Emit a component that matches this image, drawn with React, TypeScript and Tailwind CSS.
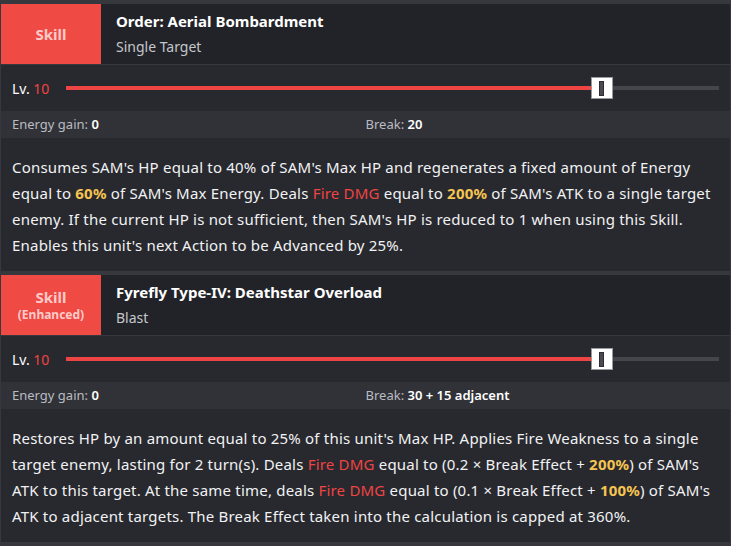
import React from 'react';

type Part = { t: string; c?: 'fire' | 'num' };

interface SkillProps {
  kind: string;
  sub?: string;
  name: string;
  target: string;
  level: number;
  energy: string;
  brk: string;
  desc: Part[];
}

const Slider: React.FC<{ value: number; max: number }> = ({ value, max }) => {
  const frac = value / max;
  return (
    <div className="relative flex-1 h-5 flex items-center">
      <div className="w-full h-[4px] bg-[#45464b]" />
      <div className="absolute left-0 h-[4px] bg-[#ef4444]" style={{ width: `calc((100% - 20px) * ${frac} + 10px)` }} />
      <div
        className="absolute top-0 w-5 h-5 bg-white flex items-center justify-center shadow-[0_0_0_1px_#9a9ba0]"
        style={{ left: `calc((100% - 20px) * ${frac} - 2px)` }}
      >
        <div className="w-[5px] h-[15px] bg-[#4a4b52] border border-[#2e2f34]" />
      </div>
    </div>
  );
};

const SkillCard: React.FC<SkillProps> = ({ kind, sub, name, target, level, energy, brk, desc }) => (
  <div className="border-t-[4px] border-[#37383d]">
    {/* Header */}
    <div className="flex h-[61px] bg-[#222328] border-b border-[#37383d]">
      <div className="w-[100px] bg-[#ef4a43] flex flex-col items-center justify-center text-[#fecaca] font-bold leading-tight">
        <span className="text-[15px]">{kind}</span>
        {sub && <span className="text-[12px] mt-[1px]">{sub}</span>}
      </div>
      <div className="pl-[15px] flex flex-col justify-center">
        <div className="text-[15px] font-bold text-white leading-[20px]">{name}</div>
        <div className="text-[14px] text-[#c4c7cc] leading-[20px] mt-[6px]">{target}</div>
      </div>
    </div>

    {/* Level */}
    <div className="flex items-center h-[46px] bg-[#28292e] pl-[11px] pr-[11px] gap-[17px]">
      <div className="text-[14px] text-white whitespace-nowrap">
        Lv. <span className="text-[#ef4444]">{level}</span>
      </div>
      <Slider value={level} max={12} />
    </div>

    {/* Stats */}
    <div className="grid grid-cols-2 h-[27px] items-center bg-[#313237] px-[11px] text-[13px] text-[#b9bcc2]">
      <div>
        Energy gain: <span className="text-white font-semibold">{energy}</span>
      </div>
      <div>
        Break: <span className="text-white font-semibold">{brk}</span>
      </div>
    </div>

    {/* Description */}
    <div className="bg-[#28292e] px-[11px] pt-[16px] pb-[13px] text-[15px] leading-[26px] tracking-[0.2px] text-[#f1f2f4]">
      {desc.map((p, i) =>
        p.c === 'fire' ? (
          <span key={i} className="text-[#ef4444]">{p.t}</span>
        ) : p.c === 'num' ? (
          <span key={i} className="text-[#f5c451] font-bold">{p.t}</span>
        ) : (
          <span key={i}>{p.t}</span>
        )
      )}
    </div>
  </div>
);

export default function App() {
  return (
    <div className="w-[731px] h-[546px] overflow-hidden bg-[#37383d] px-[1px] font-['Noto_Sans',sans-serif]">
      <SkillCard
        kind="Skill"
        name="Order: Aerial Bombardment"
        target="Single Target"
        level={10}
        energy="0"
        brk="20"
        desc={[
          { t: "Consumes SAM's HP equal to 40% of SAM's Max HP and regenerates a fixed amount of Energy equal to " },
          { t: '60%', c: 'num' },
          { t: " of SAM's Max Energy. Deals " },
          { t: 'Fire DMG', c: 'fire' },
          { t: ' equal to ' },
          { t: '200%', c: 'num' },
          { t: " of SAM's ATK to a single target enemy. If the current HP is not sufficient, then SAM's HP is reduced to 1 when using this Skill. Enables this unit's next Action to be Advanced by 25%." },
        ]}
      />
      <SkillCard
        kind="Skill"
        sub="(Enhanced)"
        name="Fyrefly Type-IV: Deathstar Overload"
        target="Blast"
        level={10}
        energy="0"
        brk="30 + 15 adjacent"
        desc={[
          { t: "Restores HP by an amount equal to 25% of this unit's Max HP. Applies Fire Weakness to a single target enemy, lasting for 2 turn(s). Deals " },
          { t: 'Fire DMG', c: 'fire' },
          { t: ' equal to (0.2 × Break Effect + ' },
          { t: '200%', c: 'num' },
          { t: ") of SAM's ATK to this target. At the same time, deals " },
          { t: 'Fire DMG', c: 'fire' },
          { t: ' equal to (0.1 × Break Effect + ' },
          { t: '100%', c: 'num' },
          { t: ") of SAM's ATK to adjacent targets. The Break Effect taken into the calculation is capped at 360%." },
        ]}
      />
    </div>
  );
}
